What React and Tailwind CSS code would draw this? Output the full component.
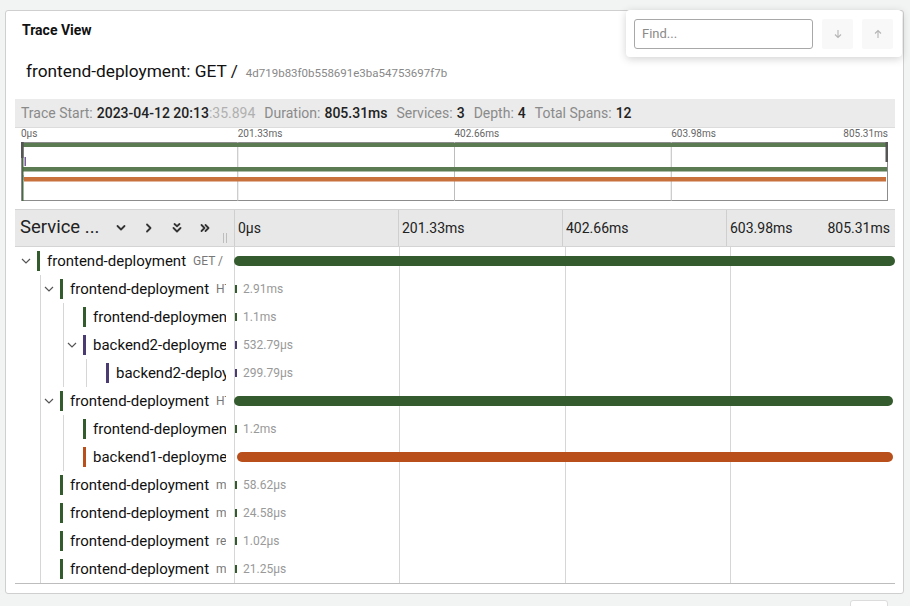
import React from "react";

const TOTAL = 805.31;

const colors = {
  green: "bg-[#345b2e]",
  purple: "bg-[#4a3c70]",
  orange: "bg-[#b9501b]",
};

const spans = [
  { depth: 0, open: true, svc: "frontend-deployment", op: "GET /", color: "green", start: 0, dur: 805.31 },
  { depth: 1, open: true, svc: "frontend-deployment", op: "HTTP GET", color: "green", label: "2.91ms" },
  { depth: 2, svc: "frontend-deployment", op: "HTTP GET /api", color: "green", label: "1.1ms" },
  { depth: 2, open: true, svc: "backend2-deployment", op: "GET /", color: "purple", label: "532.79μs" },
  { depth: 3, svc: "backend2-deployment", op: "handler", color: "purple", label: "299.79μs" },
  { depth: 1, open: true, svc: "frontend-deployment", op: "HTTP GET", color: "green", start: 0, dur: 803.0 },
  { depth: 2, svc: "frontend-deployment", op: "HTTP GET /api", color: "green", label: "1.2ms" },
  { depth: 2, svc: "backend1-deployment", op: "GET /", color: "orange", start: 3.65, dur: 799.3 },
  { depth: 1, svc: "frontend-deployment", op: "middleware", color: "green", label: "58.62μs" },
  { depth: 1, svc: "frontend-deployment", op: "middleware", color: "green", label: "24.58μs" },
  { depth: 1, svc: "frontend-deployment", op: "request handler", color: "green", label: "1.02μs" },
  { depth: 1, svc: "frontend-deployment", op: "middleware", color: "green", label: "21.25μs" },
];

const ChevronDown = () => (
  <svg width="10" height="6" viewBox="0 0 10 6" fill="none">
    <path d="M1 1 L5 5 L9 1" stroke="#555" strokeWidth="1.2" />
  </svg>
);

const HeadIcon = ({ d }) => (
  <div className="w-[28px] flex justify-center">
    <svg width="10" height="10" viewBox="0 0 10 10" fill="none">
      <path d={d} stroke="#333" strokeWidth="1.8" strokeLinecap="round" strokeLinejoin="round" />
    </svg>
  </div>
);

const Arrow = ({ up }) => (
  <svg width="8" height="10" viewBox="0 0 8 10" fill="none">
    <path
      d={up ? "M4 9 V1.5 M1 4.5 L4 1.5 L7 4.5" : "M4 1 V8.5 M1 5.5 L4 8.5 L7 5.5"}
      stroke="#b5b5b5"
      strokeWidth="1.1"
    />
  </svg>
);

const Minimap = () => (
  <svg width="867" height="59" viewBox="0 0 867 59" className="block">
    <rect x="0.5" y="0.5" width="866" height="58" fill="#fff" stroke="#8c8c8c" />
    <line x1="216.75" y1="0" x2="216.75" y2="59" stroke="#bdbdbd" />
    <line x1="433.5" y1="0" x2="433.5" y2="59" stroke="#bdbdbd" />
    <line x1="650.25" y1="0" x2="650.25" y2="59" stroke="#bdbdbd" />
    <rect x="1" y="1" width="865" height="4" fill="#5b7b52" />
    <rect x="1" y="25" width="865" height="4.5" fill="#5b7b52" />
    <rect x="3" y="35" width="862" height="4.5" fill="#c8713d" />
    <rect x="1" y="33" width="2" height="5" fill="#c9c9c9" />
    <rect x="3.5" y="15" width="1.5" height="9" fill="#7a5c9c" />
    <rect x="1" y="0" width="1.5" height="59" fill="#4a6a43" />
    <rect x="0" y="0" width="2.5" height="16" fill="#555" />
    <rect x="864.5" y="0" width="2.5" height="20" fill="#555" />
  </svg>
);

const Row = ({ s }) => {
  const left = s.start !== undefined ? (s.start / TOTAL) * 100 : 0;
  const width = s.dur !== undefined ? (s.dur / TOTAL) * 100 : 0;
  return (
    <div className="flex h-[28px]">
      <div className="w-[219px] shrink-0 flex items-stretch pl-[6px] pr-[8px] overflow-hidden">
        {Array.from({ length: s.depth }).map((_, i) => (
          <div key={i} className="w-[23px] shrink-0">
            <div className="w-[20px] h-full border-r border-[#d6d6d6]" />
          </div>
        ))}
        <div className="w-[10px] shrink-0 flex items-center justify-center">
          {s.open && <ChevronDown />}
        </div>
        <div className="ml-[6px] shrink-0 flex items-center">
          <div className={`w-[3px] h-[20px] ${colors[s.color]}`} />
        </div>
        <div className="ml-[7px] flex items-center min-w-0 overflow-hidden whitespace-nowrap">
          <span className="text-[15px] text-[#111]">{s.svc}</span>
          <span className="ml-[7px] text-[12px] text-[#777]">{s.op}</span>
        </div>
      </div>
      <div className="flex-1 flex items-center">
        {s.dur !== undefined ? (
          <div
            className={`h-[10px] rounded-full ${colors[s.color]}`}
            style={{ marginLeft: `${left}%`, width: `${width}%` }}
          />
        ) : (
          <>
            <div className={`ml-[1px] w-[2px] h-[8px] ${colors[s.color]}`} />
            <span className="ml-[6px] text-[12px] text-[#999]">{s.label}</span>
          </>
        )}
      </div>
    </div>
  );
};

export default function App() {
  return (
    <div className="relative min-h-screen bg-[#f2f3f3] pt-[10px] pl-[5px] pr-[6px] font-['Roboto',sans-serif] overflow-hidden">
      <div className="h-[584px] bg-white border border-[#cfcfcf] rounded-[3px] pl-[9px] pr-[8px]">
        <div className="pt-[11px] pl-[7px] text-[14px] leading-[16px] font-bold text-[#111]">
          Trace View
        </div>
        <div className="mt-[21px] pl-[11px] flex items-baseline leading-[24px]">
          <span className="text-[17.3px] text-[#111]">frontend-deployment: GET /</span>
          <span className="ml-[8px] text-[11.5px] text-[#888]">4d719b83f0b558691e3ba54753697f7b</span>
        </div>
        <div className="mt-[14px] h-[29px] bg-[#ebebeb] border-b border-[#dcdcdc] flex items-center pl-[6px] text-[14px] text-[#8a8a8a] whitespace-nowrap">
          <span>Trace Start: </span>
          <span className="ml-[4px] font-medium text-[#222]">2023-04-12 20:13</span>
          <span className="text-[#b0b0b0]">:35.894</span>
          <span className="ml-[9px]">Duration: </span>
          <span className="ml-[4px] font-medium text-[#222]">805.31ms</span>
          <span className="ml-[9px]">Services: </span>
          <span className="ml-[4px] font-medium text-[#222]">3</span>
          <span className="ml-[9px]">Depth: </span>
          <span className="ml-[4px] font-medium text-[#222]">4</span>
          <span className="ml-[9px]">Total Spans: </span>
          <span className="ml-[4px] font-medium text-[#222]">12</span>
        </div>
        <div className="ml-[6px] w-[867px]">
          <div className="h-[14px] grid grid-cols-4 text-[10px] leading-[12px] text-[#666]">
            <span>0μs</span>
            <span>201.33ms</span>
            <span>402.66ms</span>
            <div className="flex justify-between">
              <span>603.98ms</span>
              <span>805.31ms</span>
            </div>
          </div>
          <Minimap />
        </div>

        <div className="mt-[8px] border-t border-b border-[#d4d4d4] bg-[#e8e8e8] h-[38px] flex">
          <div className="w-[219px] shrink-0 flex items-center pl-[5px]">
            <span className="w-[87px] text-[18.5px] text-[#222] whitespace-nowrap">Service ...</span>
            <HeadIcon d="M1.5 3 L5 6.5 L8.5 3" />
            <HeadIcon d="M3 1.5 L6.5 5 L3 8.5" />
            <HeadIcon d="M2.5 1 L5 3.2 L7.5 1 M1.5 5 L5 8.5 L8.5 5" />
            <HeadIcon d="M1.5 2 L4.5 5 L1.5 8 M5.5 2 L8.5 5 L5.5 8" />
            <div className="self-end mb-[3px] ml-[4px] w-[4px] h-[10px] border-l border-r border-[#bdbdbd]" />
          </div>
          <div className="flex-1 flex text-[14px] text-[#222]">
            <div className="flex-1 border-l border-[#cfcfcf] pl-[3px] flex items-center">0μs</div>
            <div className="flex-1 border-l border-[#cfcfcf] pl-[3px] flex items-center">201.33ms</div>
            <div className="flex-1 border-l border-[#cfcfcf] pl-[3px] flex items-center">402.66ms</div>
            <div className="flex-1 border-l border-[#cfcfcf] pl-[3px] pr-[5px] flex items-center justify-between">
              <span>603.98ms</span>
              <span>805.31ms</span>
            </div>
          </div>
        </div>

        <div className="relative border-b border-[#bdbdbd]">
          <div className="absolute inset-y-0 left-[219px] right-0 flex pointer-events-none">
            <div className="flex-1 border-l border-[#d6d6d6]" />
            <div className="flex-1 border-l border-[#d6d6d6]" />
            <div className="flex-1 border-l border-[#d6d6d6]" />
            <div className="flex-1 border-l border-[#d6d6d6]" />
          </div>
          <div className="relative">
            {spans.map((s, i) => (
              <Row key={i} s={s} />
            ))}
          </div>
        </div>
      </div>

      <div className="flex justify-end pr-[16px] mt-[6px]">
        <div className="w-[38px] h-[20px] bg-white border border-[#dcdcdc] rounded-[3px]" />
      </div>

      <div className="absolute top-[10px] right-[8px] w-[276px] h-[47px] bg-white rounded-[4px] shadow-[0_2px_8px_rgba(0,0,0,0.18)] flex items-center pl-[8px] pr-[9px]">
        <input
          placeholder="Find..."
          className="w-[179px] h-[30px] border border-[#a8a8a8] rounded-[3px] px-[7px] text-[13px] text-[#333] placeholder:text-[#8a8a8a] outline-none"
        />
        <div className="ml-[9px] w-[31px] h-[30px] bg-[#f8f8f8] rounded-[2px] flex items-center justify-center">
          <Arrow />
        </div>
        <div className="ml-[9px] w-[31px] h-[30px] bg-[#f8f8f8] rounded-[2px] flex items-center justify-center">
          <Arrow up />
        </div>
      </div>
    </div>
  );
}
